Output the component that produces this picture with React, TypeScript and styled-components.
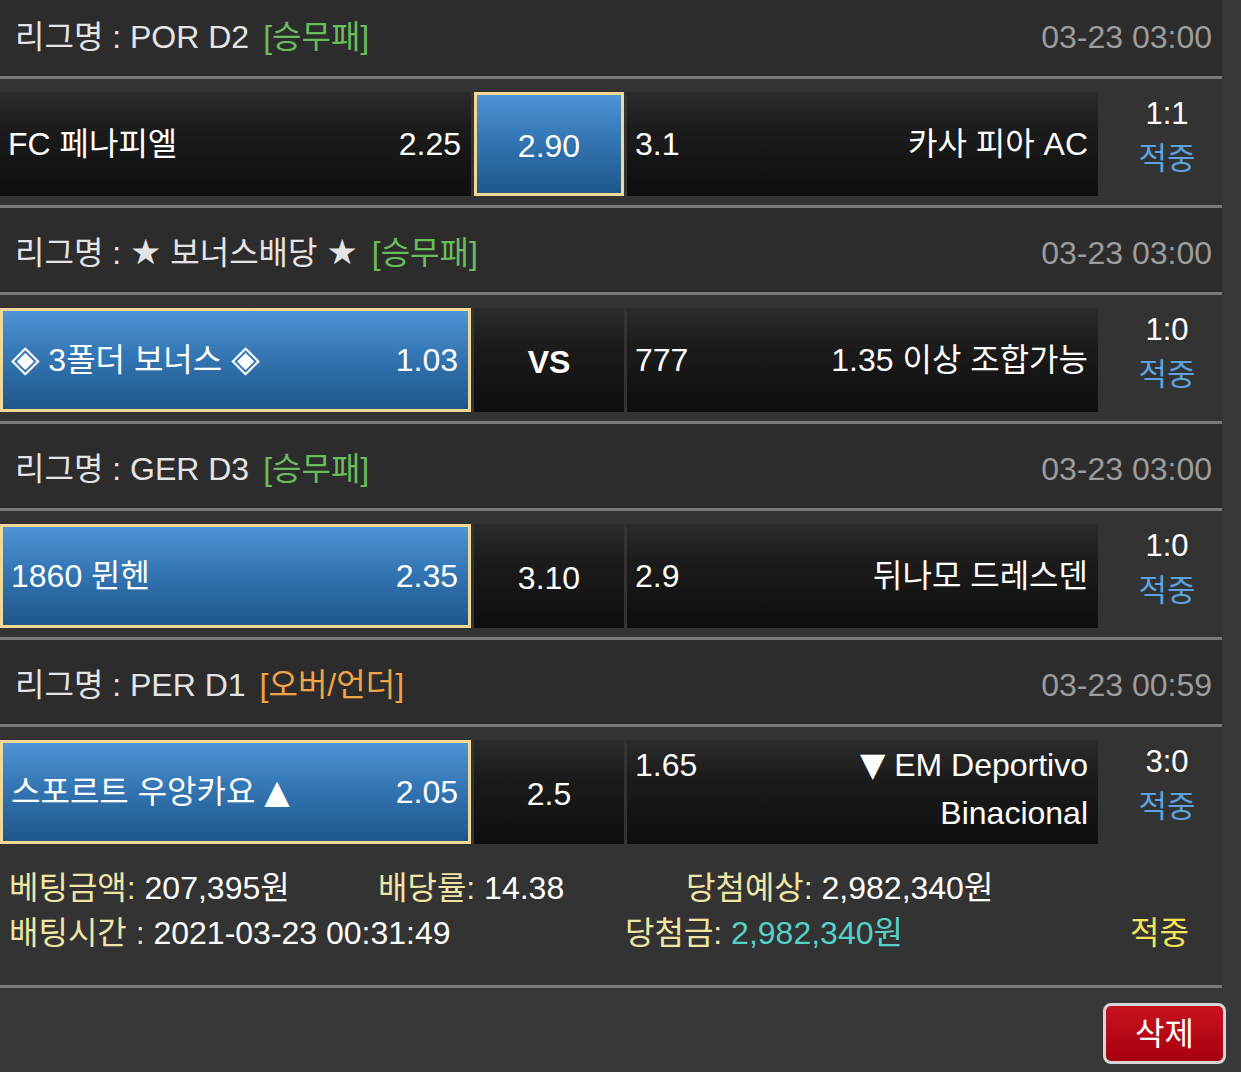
import styled, { createGlobalStyle } from "styled-components";

type Pick = "home" | "draw" | "away";

interface Game {
  id: number;
  league: React.ReactNode;
  market: string;
  marketColor: string;
  date: string;
  home: React.ReactNode;
  homeOdds: string;
  draw: string;
  drawBold?: boolean;
  away: React.ReactNode;
  awayOdds: string;
  awayTop?: boolean;
  pick: Pick;
  score: string;
}

const GREEN = "#69bd5c";
const ORANGE = "#f0a445";

// built on render so the styled glyph components below are defined
const getGames = (): Game[] => [
  {
    id: 1,
    league: "리그명 : POR D2",
    market: "[승무패]",
    marketColor: GREEN,
    date: "03-23 03:00",
    home: "FC 페나피엘",
    homeOdds: "2.25",
    draw: "2.90",
    away: "카사 피아 AC",
    awayOdds: "3.1",
    pick: "draw",
    score: "1:1",
  },
  {
    id: 2,
    league: (
      <>
        리그명 : <Star>★</Star> 보너스배당 <Star>★</Star>
      </>
    ),
    market: "[승무패]",
    marketColor: GREEN,
    date: "03-23 03:00",
    home: (
      <>
        <Diamond>◈</Diamond> 3폴더 보너스 <Diamond>◈</Diamond>
      </>
    ),
    homeOdds: "1.03",
    draw: "VS",
    drawBold: true,
    away: "1.35 이상 조합가능",
    awayOdds: "777",
    pick: "home",
    score: "1:0",
  },
  {
    id: 3,
    league: "리그명 : GER D3",
    market: "[승무패]",
    marketColor: GREEN,
    date: "03-23 03:00",
    home: "1860 뮌헨",
    homeOdds: "2.35",
    draw: "3.10",
    away: "뒤나모 드레스덴",
    awayOdds: "2.9",
    pick: "home",
    score: "1:0",
  },
  {
    id: 4,
    league: "리그명 : PER D1",
    market: "[오버/언더]",
    marketColor: ORANGE,
    date: "03-23 00:59",
    home: (
      <>
        스포르트 우앙카요 <Arrow>▲</Arrow>
      </>
    ),
    homeOdds: "2.05",
    draw: "2.5",
    away: (
      <>
        <Arrow>▼</Arrow> EM Deportivo
        <br />
        Binacional
      </>
    ),
    awayOdds: "1.65",
    awayTop: true,
    pick: "home",
    score: "3:0",
  },
];

const App = () => {
  const games = getGames();

  return (
    <>
      <GlobalStyle />
      <Page>
        <Board>
          {games.map((game, idx) => (
            <section key={game.id}>
              <LeagueHeader>
                <LeagueName>
                  {game.league}
                  <Market $color={game.marketColor}>{game.market}</Market>
                </LeagueName>
                <DateText>{game.date}</DateText>
              </LeagueHeader>
              <MatchRow $last={idx === games.length - 1}>
                <TeamCell $selected={game.pick === "home"}>
                  <TeamName>{game.home}</TeamName>
                  <Odds>{game.homeOdds}</Odds>
                </TeamCell>
                <DrawCell $selected={game.pick === "draw"} $bold={game.drawBold}>
                  {game.draw}
                </DrawCell>
                <TeamCell $selected={game.pick === "away"} $top={game.awayTop}>
                  <Odds>{game.awayOdds}</Odds>
                  <TeamName $right>{game.away}</TeamName>
                </TeamCell>
                <ScoreCell>
                  <span>{game.score}</span>
                  <Result>적중</Result>
                </ScoreCell>
              </MatchRow>
            </section>
          ))}
          <Summary>
            <SummaryLine>
              <SummaryItem $width={369}>
                <Label>베팅금액:</Label> 207,395원
              </SummaryItem>
              <SummaryItem $width={308}>
                <Label>배당률:</Label> 14.38
              </SummaryItem>
              <SummaryItem>
                <Label>당첨예상:</Label> 2,982,340원
              </SummaryItem>
            </SummaryLine>
            <SummaryLine>
              <SummaryItem $width={616}>
                <Label>배팅시간 :</Label> 2021-03-23 00:31:49
              </SummaryItem>
              <SummaryItem $width={505}>
                <Label>당첨금:</Label> <Payout>2,982,340원</Payout>
              </SummaryItem>
              <HitMark>적중</HitMark>
            </SummaryLine>
          </Summary>
        </Board>
        <Actions>
          <DeleteButton type="button">삭제</DeleteButton>
        </Actions>
      </Page>
    </>
  );
};

export default App;

const FONT = `"Liberation Sans", "Noto Sans CJK KR", sans-serif`;

const GlobalStyle = createGlobalStyle`
  html, body {
    margin: 0;
    padding: 0;
    background: #383838;
  }
  body {
    font-family: ${FONT};
    color: #ffffff;
    overflow: hidden;
  }
`;

const Page = styled.div`
  margin-top: -8px;
  width: 1241px;
`;

const Board = styled.div`
  width: 1222px;
`;

const LeagueHeader = styled.div`
  display: flex;
  align-items: center;
  justify-content: space-between;
  box-sizing: border-box;
  height: 87px;
  padding: 6px 10px 0 15px;
  background: #2c2c2c;
  border-bottom: 3px solid #7a7a7a;
  font-size: 32px;
  line-height: 40px;
`;

const LeagueName = styled.div`
  color: #e4e4e4;
  white-space: nowrap;
`;

const Star = styled.span`
  font-family: "DejaVu Sans", sans-serif;
  font-size: 35px;
  line-height: 0;
`;

const Market = styled.span<{ $color: string }>`
  margin-left: 14px;
  color: ${(p) => p.$color};
`;

const DateText = styled.div`
  color: #9c9c9c;
`;

const MatchRow = styled.div<{ $last: boolean }>`
  display: grid;
  grid-template-columns: 471px 150px 471px 124px;
  column-gap: 3px;
  padding: 13px 0 9px;
  background: #333333;
  border-bottom: ${(p) => (p.$last ? "none" : "3px solid #7a7a7a")};
  font-size: 32px;
  line-height: 48px;
`;

const cellBg = `linear-gradient(to bottom, #2b2b2b 0%, #1c1c1c 35%, #0e0e0e 100%)`;
const pickBg = `linear-gradient(to bottom, #4d94d4 0%, #3476b4 45%, #1e5689 100%)`;

const TeamCell = styled.div<{ $selected: boolean; $top?: boolean }>`
  display: flex;
  align-items: ${(p) => (p.$top ? "flex-start" : "center")};
  justify-content: space-between;
  box-sizing: border-box;
  height: 104px;
  padding: ${(p) => (p.$top ? "1px" : "0")} 10px 0 8px;
  background: ${(p) => (p.$selected ? pickBg : cellBg)};
  border: ${(p) => (p.$selected ? "3px solid #f1d995" : "none")};
  white-space: nowrap;
`;

const TeamName = styled.span<{ $right?: boolean }>`
  text-align: ${(p) => (p.$right ? "right" : "left")};
`;

const Odds = styled.span``;

const Diamond = styled.span`
  font-family: "DejaVu Sans", sans-serif;
  font-size: 37px;
  line-height: 0;
`;

const Arrow = styled.span`
  font-family: "DejaVu Sans", sans-serif;
  font-size: 33px;
  line-height: 0;
`;

const DrawCell = styled.div<{ $selected: boolean; $bold?: boolean }>`
  display: flex;
  align-items: center;
  justify-content: center;
  box-sizing: border-box;
  height: 104px;
  padding-top: 4px;
  background: ${(p) => (p.$selected ? pickBg : cellBg)};
  border: ${(p) => (p.$selected ? "3px solid #f1d995" : "none")};
  font-weight: ${(p) => (p.$bold ? 700 : 400)};
`;

const ScoreCell = styled.div`
  display: flex;
  flex-direction: column;
  align-items: center;
  justify-content: center;
  height: 104px;
  padding: 0 0 16px 8px;
  box-sizing: border-box;
  line-height: 45px;
  font-size: 31px;
`;

const Result = styled.span`
  color: #5ba2de;
`;

const Summary = styled.div`
  padding: 13px 0 29px 9px;
  background: #333333;
  border-bottom: 3px solid #7a7a7a;
  font-size: 32px;
  line-height: 45px;
`;

const SummaryLine = styled.div`
  display: flex;
  white-space: nowrap;
`;

const SummaryItem = styled.div<{ $width?: number }>`
  flex: 0 0 ${(p) => (p.$width ? `${p.$width}px` : "auto")};
`;

const Label = styled.span`
  color: #efe6a6;
`;

const Payout = styled.span`
  color: #54d2c6;
`;

const HitMark = styled.span`
  color: #f2e35a;
`;

const Actions = styled.div`
  display: flex;
  justify-content: flex-end;
  padding: 15px 15px 0 0;
`;

const DeleteButton = styled.button`
  width: 123px;
  height: 61px;
  border: 3px solid #d6d6d6;
  border-radius: 8px;
  background: linear-gradient(to bottom, #c8121f 0%, #a8000f 100%);
  color: #ffffff;
  font-family: ${FONT};
  font-size: 32px;
  line-height: 1;
  cursor: pointer;
`;
